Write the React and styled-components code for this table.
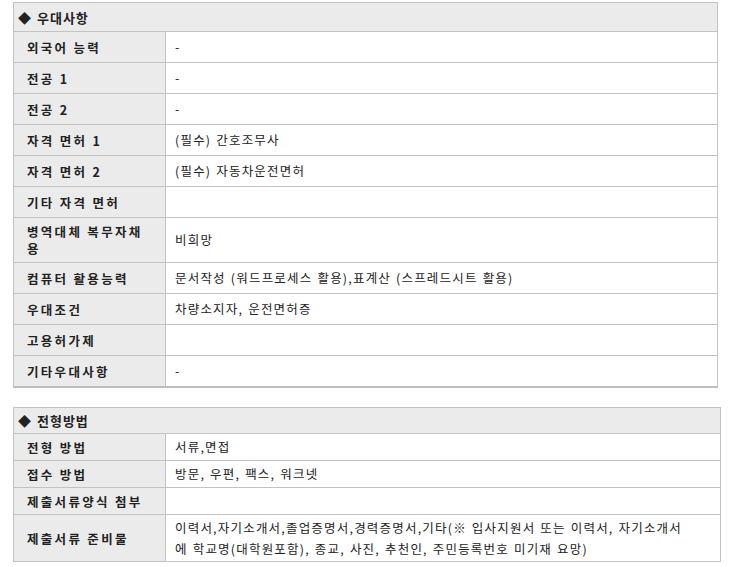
import React from "react";
import styled, { createGlobalStyle } from "styled-components";

const GlobalStyle = createGlobalStyle`
  body {
    margin: 0;
    background: #ffffff;
    font-family: "Noto Sans CJK KR", "Noto Sans", sans-serif;
  }
`;

const Page = styled.div`
  display: flex;
  flex-direction: column;
  gap: 19px;
  padding: 2px 0 0 13px;
`;

const Table = styled.table`
  width: ${({ $width }) => $width}px;
  border-collapse: collapse;
  table-layout: fixed;
  font-size: 12px;
  color: #222;
  border-bottom: ${({ $thick }) => ($thick ? "2px solid #bdbdbd" : "none")};
`;

const LabelCol = styled.col`
  width: 152px;
`;

const HeadCell = styled.th`
  height: ${({ $h }) => $h}px;
  padding: 0 0 0 4px;
  background: #ebebeb;
  border: 1px solid #c3c3c3;
  text-align: left;
  font-weight: bold;
  font-size: 13px;
  letter-spacing: 1px;
`;

const Diamond = styled.span`
  font-size: 13px;
  margin-right: 1px;
`;

const Label = styled.th`
  height: ${({ $h }) => $h}px;
  padding: 0 0 0 13px;
  background: #ebebeb;
  border: 1px solid #c3c3c3;
  text-align: left;
  font-weight: bold;
  font-size: 12.5px;
  line-height: 17px;
  letter-spacing: 2.3px;
`;

const Value = styled.td`
  height: ${({ $h }) => $h}px;
  padding: 0 0 0 9px;
  background: #ffffff;
  border: 1px solid #c3c3c3;
  font-size: 12.5px;
  line-height: ${({ $lh }) => $lh || 16}px;
  letter-spacing: 1.2px;
  word-spacing: 1px;
`;

const prefer = [
  ["외국어 능력", "-"],
  ["전공 1", "-"],
  ["전공 2", "-"],
  ["자격 면허 1", "(필수) 간호조무사"],
  ["자격 면허 2", "(필수) 자동차운전면허"],
  ["기타 자격 면허", ""],
  [
    <>
      병역대체 복무자채
      <br />용
    </>,
    "비희망",
    44,
  ],
  ["컴퓨터 활용능력", "문서작성 (워드프로세스 활용),표계산 (스프레드시트 활용)"],
  ["우대조건", "차량소지자, 운전면허증"],
  ["고용허가제", ""],
  ["기타우대사항", "-"],
];

const screening = [
  ["전형 방법", "서류,면접"],
  ["접수 방법", "방문, 우편, 팩스, 워크넷"],
  ["제출서류양식 첨부", ""],
  [
    "제출서류 준비물",
    <>
      이력서,자기소개서,졸업증명서,경력증명서,기타(※ 입사지원서 또는 이력서, 자기소개서
      <br />
      에 학교명(대학원포함), 종교, 사진, 추천인, 주민등록번호 미기재 요망)
    </>,
    46,
    21,
  ],
];

const Section = ({ title, rows, width, rowH, headH, thick }) => (
  <Table $width={width} $thick={thick}>
    <colgroup>
      <LabelCol />
      <col />
    </colgroup>
    <tbody>
      <tr>
        <HeadCell colSpan={2} $h={headH}>
          <Diamond>◆</Diamond> {title}
        </HeadCell>
      </tr>
      {rows.map(([label, value, h, lh], i) => (
        <tr key={i}>
          <Label $h={h || rowH}>{label}</Label>
          <Value $h={h || rowH} $lh={lh}>
            {value}
          </Value>
        </tr>
      ))}
    </tbody>
  </Table>
);

export default function App() {
  return (
    <>
      <GlobalStyle />
      <Page>
        <Section title="우대사항" rows={prefer} width={705} rowH={30} headH={28} thick />
        <Section title="전형방법" rows={screening} width={708} rowH={26} headH={25} />
      </Page>
    </>
  );
}
